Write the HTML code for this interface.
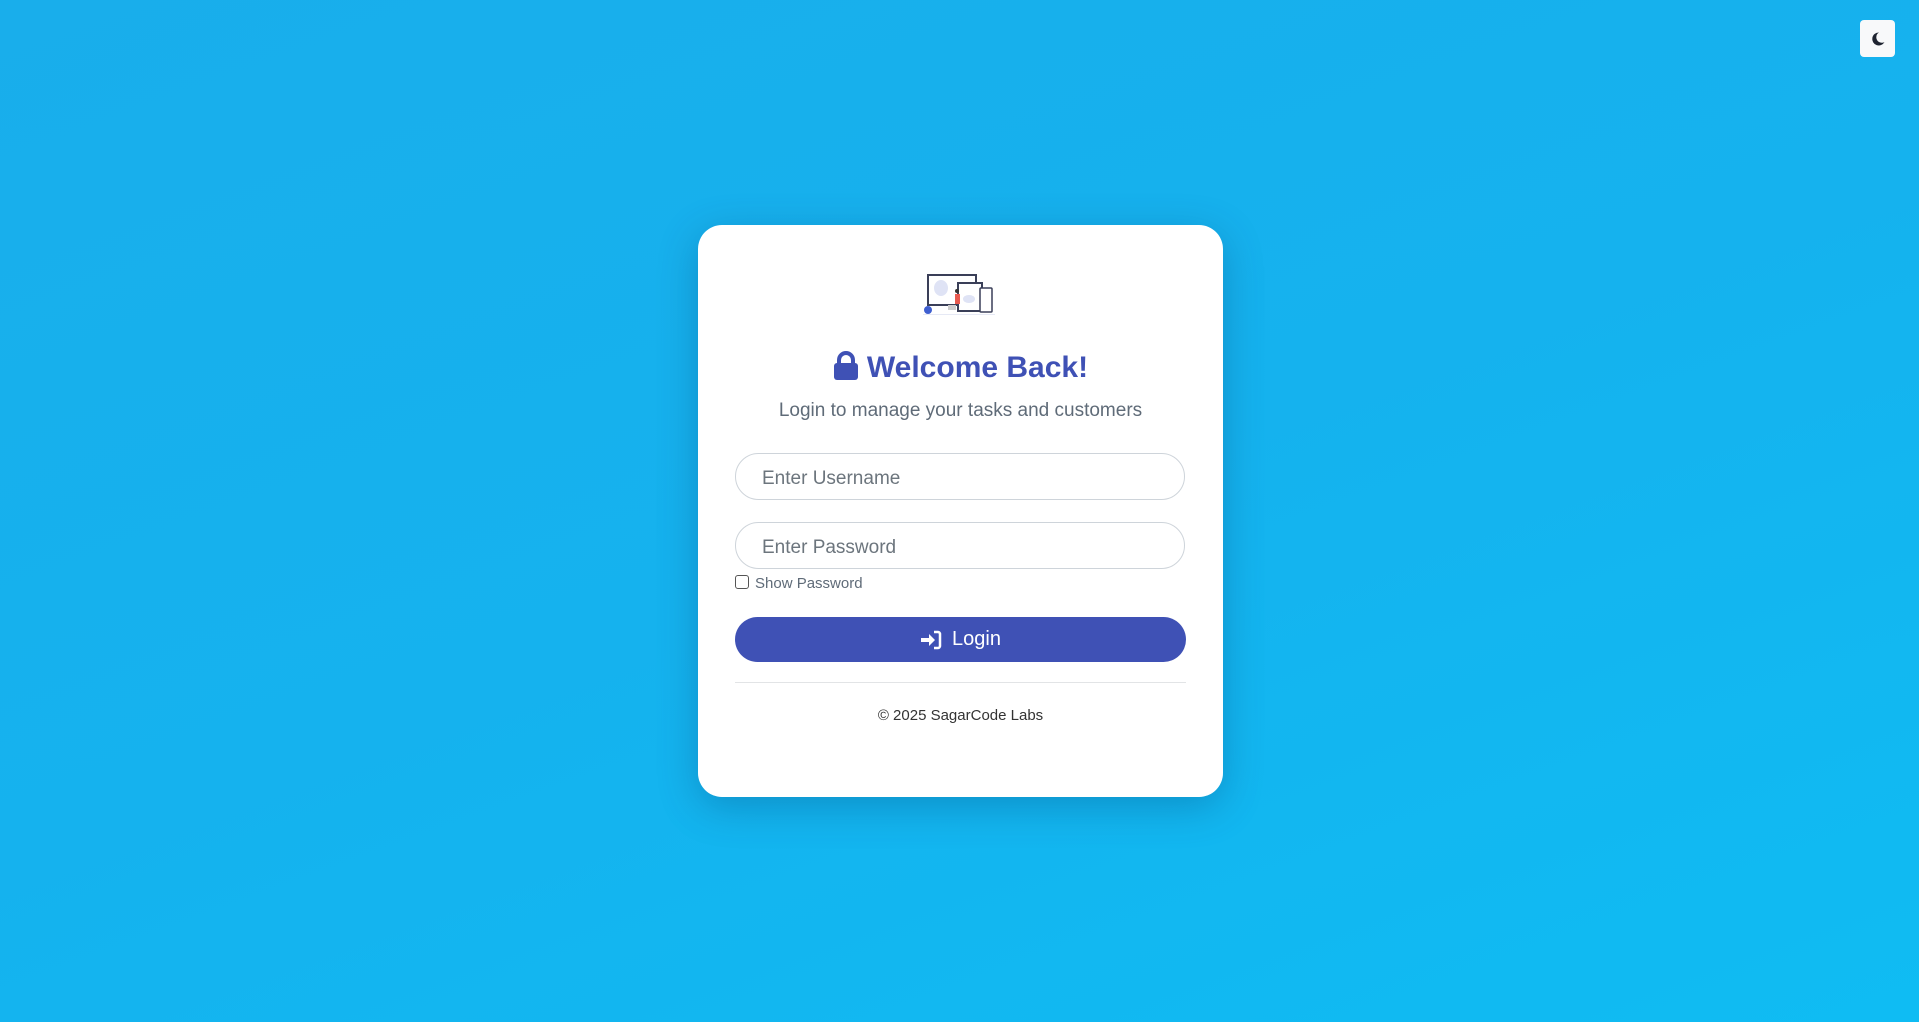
<!DOCTYPE html>
<html><head><meta charset="utf-8">
<style>
*{box-sizing:border-box;margin:0;padding:0}
html,body{width:1919px;height:1022px;overflow:hidden}
body{background:linear-gradient(160deg,#19aeeb 0%,#15b2ee 50%,#0fbcf3 100%);font-family:"Liberation Sans",sans-serif;position:relative}
.moon{position:absolute;left:1860px;top:20px;width:35px;height:37px;background:#f8f9fa;border-radius:4px;display:flex;align-items:center;justify-content:center}
.card{position:absolute;left:698px;top:225px;width:525px;height:572px;background:#fff;border-radius:24px;box-shadow:0 10px 40px rgba(0,60,110,.3)}
.abs{position:absolute}
.title{left:0;width:525px;top:126px;text-align:center;color:#3f51b5;font-weight:bold;font-size:30px}
.sub{left:0;width:525px;top:175px;text-align:center;color:#5f6b78;font-size:19px}
.inp{left:37px;width:450px;height:47px;border:1px solid #ced4da;border-radius:24px;color:#6c757d;font-size:19px;padding-left:26px;line-height:49px}
.chk{left:37px;top:350px;width:14px;height:14px;border:1.5px solid #555;border-radius:3px}
.btn{left:37px;width:451px;top:392px;height:45px;background:#3f51b5;border-radius:23px;color:#fff;font-size:20px;display:flex;align-items:center;justify-content:center;gap:10px}
</style></head><body>
<div class="moon"><svg width="16" height="16" viewBox="0 0 16 16"><path d="M9 1.5A6.5 6.5 0 1 0 14.5 11 5 5 0 0 1 9 1.5z" fill="#1e2430"/></svg></div>
<div class="card">
 <svg class="abs" style="left:225px;top:49px" width="72" height="42" viewBox="0 0 72 42">
  <rect x="5" y="1" width="48" height="30" fill="#fff" stroke="#3a3f58" stroke-width="2"/>
  <ellipse cx="18" cy="14" rx="7" ry="8" fill="#dfe3f5"/>
  <rect x="25" y="31" width="8" height="5" fill="#ccc"/>
  <rect x="35" y="9" width="24" height="28" fill="#fff" stroke="#3a3f58" stroke-width="2"/>
  <ellipse cx="46" cy="25" rx="6" ry="4" fill="#dfe3f5"/>
  <rect x="57" y="14" width="12" height="24" rx="1" fill="#fff" stroke="#3a3f58" stroke-width="1.5"/>
  <rect x="32" y="20" width="5" height="10" fill="#e85a4f"/>
  <circle cx="34" cy="17" r="2" fill="#333"/>
  <circle cx="5" cy="36" r="4" fill="#3f5fd0"/>
  <rect x="0" y="40" width="72" height="1" fill="#e6e9f5"/>
 </svg>
 <div class="abs title"><svg width="26" height="30" viewBox="0 0 26 30" style="vertical-align:-4px;margin-right:8px"><path d="M6 13V9a7 7 0 0 1 14 0v4" fill="none" stroke="#3f51b5" stroke-width="4"/><rect x="1" y="12" width="24" height="17" rx="3" fill="#3f51b5"/></svg>Welcome Back!</div>
 <div class="abs sub">Login to manage your tasks and customers</div>
 <div class="abs inp" style="top:228px">Enter Username</div>
 <div class="abs inp" style="top:297px">Enter Password</div>
 <div class="abs chk"></div>
 <div class="abs" style="left:57px;top:350px;font-size:15px;color:#5f6b78">Show Password</div>
 <div class="abs btn"><svg width="22" height="20" viewBox="0 0 22 20"><path d="M1 8h8V4l6 6-6 6v-4H1z" fill="#fff"/><path d="M14 2h4a2 2 0 0 1 2 2v12a2 2 0 0 1-2 2h-4" fill="none" stroke="#fff" stroke-width="2.5"/></svg>Login</div>
 <div class="abs" style="left:37px;width:451px;top:457px;height:1px;background:#e2e4e6"></div>
 <div class="abs" style="left:0;width:525px;top:482px;text-align:center;font-size:15px;color:#333">© 2025 SagarCode Labs</div>
</div>
</body></html>
